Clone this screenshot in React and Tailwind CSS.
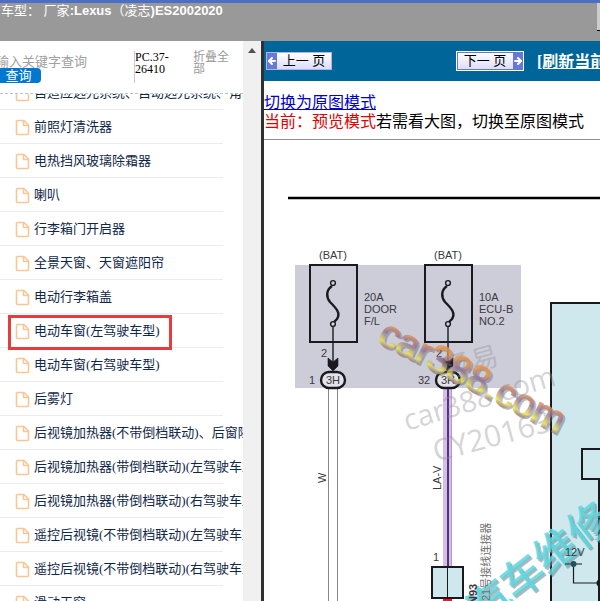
import { ArrowLeft, ArrowRight } from "lucide-react";

const items = [
  "自适应远光系统、自动远光系统、角",
  "前照灯清洗器",
  "电热挡风玻璃除霜器",
  "喇叭",
  "行李箱门开启器",
  "全景天窗、天窗遮阳帘",
  "电动行李箱盖",
  "电动车窗(左驾驶车型)",
  "电动车窗(右驾驶车型)",
  "后雾灯",
  "后视镜加热器(不带倒档联动)、后窗除",
  "后视镜加热器(带倒档联动)(左驾驶车型",
  "后视镜加热器(带倒档联动)(右驾驶车型",
  "遥控后视镜(不带倒档联动)(左驾驶车型",
  "遥控后视镜(不带倒档联动)(右驾驶车型",
  "滑动天窗",
];

const selected = 7;

function FileIcon() {
  return (
    <svg width="15" height="17" viewBox="0 0 15 17" fill="none" stroke="#f8c795" strokeWidth="1.6" strokeLinejoin="round" className="shrink-0">
      <path d="M2.500 1.500H9L13.500 6V14.500a1 1 0 0 1-1 1H2.500a1 1 0 0 1-1-1V2.500a1 1 0 0 1 1-1Z" />
      <path d="M8.500 1.500V6.500H13.500" />
    </svg>
  );
}

function Header() {
  return (
    <header className="h-[41px] shrink-0 flex justify-between border-t-3 border-[#4a6fc4] bg-[#999999] overflow-hidden">
      <h1 className="pl-px whitespace-nowrap text-[13px] leading-4 text-white font-bold">
        <span className="font-normal">车型： 厂家</span>:Lexus<span className="font-normal">（凌志</span>)ES2002020
      </h1>
      <div className="w-[3px] h-7 bg-[#cccccc] border-b border-black" />
    </header>
  );
}

function Sidebar() {
  return (
    <aside className="w-[261px] shrink-0 flex bg-white overflow-hidden">
      <div className="flex-1 min-w-0 flex flex-col overflow-hidden">
        <form className="h-[52px] shrink-0 flex items-start pt-[10px]" onSubmit={(e) => e.preventDefault()}>
          <div className="w-[134px] shrink-0">
            <input
              type="text"
              aria-label="关键字"
              placeholder="输入关键字查询"
              className="block w-32 h-[17px] -ml-1 pt-1 text-[13px] leading-4 placeholder:text-[#a0a0a0] outline-none"
            />
            <button className="block w-[41px] h-[15px] rounded-r-sm bg-[#0078d0] text-white text-[13px] leading-[14px] pr-1">
              查询
            </button>
          </div>
          <div className="w-[59px] h-8 border-l border-[#c8c8d0] pr-5 font-['Liberation_Serif'] text-[12px] leading-3 text-black">
            PC.37-26410
          </div>
          <button type="button" className="w-9 text-left text-[12px] leading-3 text-[#999999]">
            折叠全部
          </button>
        </form>
        <ul className="flex-1 min-h-0 overflow-hidden border-t border-dashed border-[#b8c4d0]">
          {items.map((item, i) => (
            <li key={item} className={i === 0 ? "relative -mt-[18px]" : "relative"}>
              <a href="#" className="h-[34px] flex items-center gap-1 pl-[15px] whitespace-nowrap font-['Liberation_Serif','Noto_Sans_CJK_SC',serif] text-[13px] text-[#102848]">
                <FileIcon />
                <span>{item}</span>
              </a>
              <div className="h-px -mt-px mr-5 bg-[#ececec]" />
              {i === selected && (
                <div className="absolute top-px left-2 w-[164px] h-[35px] border-3 border-[#e83c3c]" />
              )}
            </li>
          ))}
        </ul>
      </div>
      <div className="w-[18px] bg-[#f0f0f0] flex justify-center pt-[7px]">
        <svg width="8" height="5" viewBox="0 0 8 5">
          <path d="M4 0L8 5H0Z" fill="#505050" />
        </svg>
      </div>
    </aside>
  );
}

function PageArrow({ icon: Icon }) {
  return (
    <span className="w-[10px] h-full shrink-0 flex items-center justify-center bg-[#6878d8] text-white">
      <Icon size={10} strokeWidth={5} />
    </span>
  );
}

function Toolbar() {
  return (
    <nav className="h-10 shrink-0 flex items-center bg-[#006699] overflow-hidden pl-[2px]">
      <button className="w-[66px] h-[18px] shrink-0 flex items-center bg-linear-to-b from-white to-[#dcdcfc] border border-[#b0b4e8] text-[13px] leading-4 text-black whitespace-nowrap">
        <PageArrow icon={ArrowLeft} />
        <span className="flex-1">上一 页</span>
      </button>
      <button className="ml-[124px] w-[68px] h-5 shrink-0 flex items-center bg-linear-to-b from-white to-[#dcdcfc] border border-white outline outline-[#6878c8] -outline-offset-2 text-[13px] leading-4 text-black whitespace-nowrap">
        <span className="flex-1">下一 页</span>
        <PageArrow icon={ArrowRight} />
      </button>
      <a href="#" className="ml-[13px] pt-[2px] shrink-0 text-white font-bold text-[16px] underline whitespace-nowrap font-['Liberation_Serif','Noto_Sans_CJK_SC',serif]">
        [刷新当前页]
      </a>
    </nav>
  );
}

function Fuse({ x, pin, no, lines }) {
  return (
    <g transform={`translate(${x} 0)`}>
      <g fill="none" stroke="#1a1a1e">
        <rect x="-23" y="265" width="47" height="77" strokeWidth="2" />
        <path d="M-1 286C-7 290 -7 297 -3 302C3 308 8 313 4 319L1 322" strokeWidth="2.4" />
        <circle cx="0" cy="283" r="2.400" fill="#cdcdd9" strokeWidth="1.4" />
        <circle cx="0" cy="324" r="2.400" fill="#cdcdd9" strokeWidth="1.4" />
        <path d="M0 327V362" strokeWidth="1.4" />
        <path d="M-5 358L0 362L5 358V366L0 371L-5 366Z" fill="#1a1a1e" strokeWidth="0.6" />
        <rect x="-12" y="372" width="24" height="16" rx="8" strokeWidth="2.4" fill="#e2e2ea" />
      </g>
      <g fill="#3a3a40" fontSize="11">
        <text x="0" y="259" textAnchor="middle">(BAT)</text>
        <text x="31" y="301">{lines[0]}</text>
        <text x="31" y="313">{lines[1]}</text>
        <text x="31" y="325">{lines[2]}</text>
        <text x="-12" y="357">2</text>
        <text x={pin === "1" ? -24 : -30} y="384">{pin}</text>
        <text x="0" y="384" textAnchor="middle">{no}</text>
      </g>
    </g>
  );
}

function WiringDiagram() {
  return (
    <svg width="336" height="461" viewBox="264 140 336 461" className="block font-['Liberation_Sans','Noto_Sans_CJK_SC',sans-serif]">
      <defs>
        <linearGradient id="gold" x1="0" y1="0" x2="0" y2="1">
          <stop offset="0.300" stopColor="#e8954a" />
          <stop offset="0.500" stopColor="#8a70a0" />
          <stop offset="0.720" stopColor="#ece650" />
          <stop offset="0.850" stopColor="#8a70a0" />
        </linearGradient>
      </defs>
      <path d="M288 198H600" stroke="#000000" strokeWidth="2.4" />
      <rect x="295" y="265" width="226" height="123" fill="#cdcdd9" />
      <rect x="551" y="303" width="60" height="310" fill="#cfe8ee" stroke="#1a1a1e" strokeWidth="2" />

      {/* wires */}
      <path d="M328.500 388V601M337.500 388V601" stroke="#888888" strokeWidth="1" />
      <rect x="443" y="388" width="9" height="180" fill="#d3c0e0" />
      <path d="M448 388V568" stroke="#54308c" strokeWidth="2" />
      <path d="M451.500 388V568" stroke="#b49cc8" strokeWidth="1" />

      <Fuse x={333} pin="1" no="3H" lines={["20A", "DOOR", "F/L"]} />
      <Fuse x={448} pin="32" no="3H" lines={["10A", "ECU-B", "NO.2"]} />

      <rect x="432" y="567" width="31" height="31" fill="#cfe8ee" stroke="#1a1a1e" strokeWidth="2" />
      <path d="M447.500 568V598" stroke="#1a1a1e" strokeWidth="1" />
      <rect x="443" y="599" width="9" height="4" fill="#d82030" />

      <path d="M610 449H582V479H610M599 479V601" fill="none" stroke="#1a1a1e" strokeWidth="2" />

      {/* watermarks */}
      <g fill="#909098" fillOpacity="0.4" className="font-['Open_Sans','Noto_Sans_CJK_SC',sans-serif]">
        <text transform="translate(448 378) rotate(-15)" fontSize="27">汤易</text>
        <text transform="translate(407 431) rotate(-17)" fontSize="29">car388.com</text>
        <text transform="translate(436 462) rotate(-15)" fontSize="30">CY20163</text>
      </g>
      <g fontSize="39">
        <text transform="translate(378 344) rotate(27)" fill="#66666e" stroke="#66666e" strokeWidth="1" opacity="0.45">car388.com</text>
        <text transform="translate(376 342) rotate(27)" fill="url(#gold)" stroke="url(#gold)" strokeWidth="1.4" opacity="0.8">car388.com</text>
      </g>
      <g fontSize="42">
        <text transform="translate(451 655) rotate(-38)" fill="#788890" stroke="#788890" strokeWidth="1" opacity="0.6">易汽车维修</text>
        <text transform="translate(449 653) rotate(-38)" fill="#5cd8e0" stroke="#5cd8e0" strokeWidth="1" opacity="0.85">易汽车维修</text>
      </g>

      <g fill="#3a3a40" fontSize="11">
        <text transform="translate(326 483) rotate(-90)">W</text>
        <text transform="translate(441 490) rotate(-90)">LA-V</text>
        <text x="433" y="561">1</text>
        <text transform="translate(477 604) rotate(-90)" fontWeight="bold">N93</text>
        <text transform="translate(490 601) rotate(-90)" fill="#707070">21号接线连接器</text>
      </g>
      <path d="M565 564H582M573.500 564V583H600" fill="none" stroke="#1a1a1e" strokeWidth="1.2" />
      <circle cx="573.500" cy="564" r="3" fill="#1a5560" />
      <circle cx="600" cy="583" r="3.500" fill="#1a1a1e" />
      <text x="565" y="556" fontSize="11" fill="#3a3a40">12V</text>
    </svg>
  );
}

export default function App() {
  return (
    <div className="h-screen flex flex-col overflow-hidden bg-white font-['Liberation_Sans','Noto_Sans_CJK_SC',sans-serif]">
      <Header />
      <div className="flex-1 min-h-0 flex">
        <Sidebar />
        <main className="flex-1 min-w-0 flex flex-col border-l-3 border-[#303030] overflow-hidden">
          <Toolbar />
          <div className="shrink-0 pt-3 pb-2 border-b border-[#909090] text-[16px] leading-[19px] text-black whitespace-nowrap overflow-hidden">
            <a href="#" className="block text-[#0000cc] underline">切换为原图模式</a>
            <p>
              <span className="text-[#e00000]">当前：预览模式</span>若需看大图，切换至原图模式
            </p>
          </div>
          <div className="flex-1 min-h-0 overflow-hidden">
            <WiringDiagram />
          </div>
        </main>
      </div>
    </div>
  );
}
